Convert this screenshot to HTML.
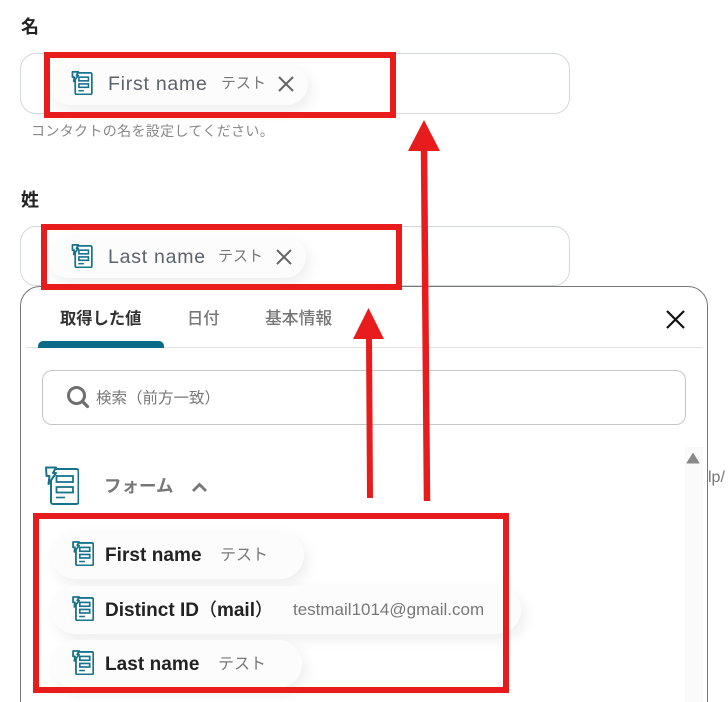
<!DOCTYPE html>
<html lang="ja">
<head>
<meta charset="utf-8">
<style>
html,body{margin:0;padding:0;background:#fff;}
#r{position:relative;width:728px;height:702px;overflow:hidden;background:#fff;font-family:"Liberation Sans","Noto Sans CJK JP",sans-serif;}
#r>*{position:absolute;}
.t{white-space:nowrap;line-height:1;}
.input{box-sizing:border-box;border:1px solid #d3d7de;border-radius:16px;background:#fff;}
.chip{border-radius:24px;background:#fcfcfc;box-shadow:4px 6px 14px rgba(0,0,0,.07);}
.red{box-sizing:border-box;border:6px solid #e81c1c;}
.name{color:#5c636c;font-size:19.5px;}
.jp{color:#777;font-size:15px;}
.b{color:#222;font-size:19px;font-weight:bold;}
.tab{font-size:16.3px;font-weight:500;color:#777;}
</style>
</head>
<body>
<div id="r">
<svg width="0" height="0" style="position:absolute"><defs>
<symbol id="ic" viewBox="0 0 34 39">
<rect x="6" y="3" width="27.5" height="35" rx="2" fill="#fff" stroke="#17738c" stroke-width="2"/>
<path d="M1 1.500H11L8 7H11L3.500 18L4.500 10H1.500Z" fill="#fff" stroke="#17738c" stroke-width="2" stroke-linejoin="round"/>
<rect x="11.500" y="10" width="16.500" height="6" fill="none" stroke="#17738c" stroke-width="1.800"/>
<rect x="11.500" y="21" width="16.500" height="5.500" fill="none" stroke="#17738c" stroke-width="1.800"/>
<path d="M11 31.500H20" stroke="#17738c" stroke-width="1.600"/>
</symbol>
<symbol id="is" viewBox="0 0 34 39">
<rect x="6" y="3" width="27" height="35" rx="2" fill="#fff" stroke="#17738c" stroke-width="2.800"/>
<path d="M1.500 1.500H11L8 7H11L3.500 17L4.500 10H1.500Z" fill="#fff" stroke="#17738c" stroke-width="2.800" stroke-linejoin="round"/>
<rect x="12" y="10" width="15.500" height="6" fill="none" stroke="#17738c" stroke-width="2.600"/>
<rect x="12" y="21" width="15.500" height="5.500" fill="none" stroke="#17738c" stroke-width="2.600"/>
<path d="M11 32H20" stroke="#17738c" stroke-width="2.400"/>
</symbol></defs></svg>

<div class="t" style="left:21px;top:18px;font-size:18px;font-weight:bold;color:#222;">名</div>
<div class="input" style="left:20px;top:53px;width:550px;height:61px;"></div>
<div class="chip" style="left:49px;top:63px;width:259px;height:42px;"></div>
<svg style="left:71px;top:71px" width="22" height="24"><use href="#is" width="22" height="24"/></svg>
<div class="t name" style="left:108px;top:75px;letter-spacing:.75px;">First name</div>
<div class="t jp" style="left:221px;top:76px;">テスト</div>
<svg style="left:277px;top:75px" width="18" height="18"><path d="M2 2L16 16M16 2L2 16" stroke="#666" stroke-width="2"/></svg>
<div class="t" style="left:31px;top:124px;font-size:14px;color:#888;letter-spacing:.35px;">コンタクトの名を設定してください。</div>

<div class="t" style="left:21px;top:191px;font-size:18px;font-weight:bold;color:#222;">姓</div>
<div class="input" style="left:20px;top:226px;width:550px;height:60px;"></div>
<div class="chip" style="left:47px;top:236px;width:259px;height:42px;"></div>
<svg style="left:71px;top:244px" width="22" height="24"><use href="#is" width="22" height="24"/></svg>
<div class="t name" style="left:108px;top:248px;letter-spacing:.75px;">Last name</div>
<div class="t jp" style="left:218px;top:249px;">テスト</div>
<svg style="left:275px;top:248px" width="18" height="18"><path d="M2 2L16 16M16 2L2 16" stroke="#666" stroke-width="2"/></svg>

<div style="box-sizing:border-box;left:20px;top:286px;width:688px;height:440px;border:1px solid #777;border-radius:20px;background:#fff;"></div>
<div class="t tab" style="left:60px;top:311px;color:#333;font-weight:bold;">取得した値</div>
<div class="t tab" style="left:187px;top:311px;">日付</div>
<div class="t tab" style="left:265px;top:311px;font-size:16.8px;">基本情報</div>
<div style="left:26px;top:347px;width:677px;height:1px;background:#e2e2e2;"></div>
<div style="left:38px;top:341px;width:126px;height:7px;background:#0b6a85;border-radius:5px 5px 0 0;"></div>
<svg style="left:664px;top:308px" width="23" height="23"><path d="M3 3L20 20M20 3L3 20" stroke="#111" stroke-width="2.200"/></svg>

<div style="box-sizing:border-box;left:42px;top:370px;width:644px;height:55px;border:1px solid #c6c6c6;border-radius:10px;"></div>
<svg style="left:65px;top:384px" width="26" height="26"><circle cx="11.500" cy="11.500" r="8" fill="none" stroke="#6f6f6f" stroke-width="3"/><path d="M17.500 17.500L22.500 22.500" stroke="#6f6f6f" stroke-width="3.200" stroke-linecap="round"/></svg>
<div class="t" style="left:96px;top:391px;font-size:15.5px;color:#777;">検索（前方一致）</div>

<svg style="left:45px;top:466px" width="34" height="39"><use href="#ic" width="34" height="39"/></svg>
<div class="t" style="left:104px;top:478px;font-size:17.5px;font-weight:bold;color:#777;">フォーム</div>
<svg style="left:190px;top:480px" width="19" height="14"><path d="M3 11L9.500 4.500L16 11" fill="none" stroke="#777" stroke-width="2.800"/></svg>

<div style="left:685px;top:447px;width:18px;height:255px;background:#fafafa;"></div>
<svg style="left:686px;top:452px" width="14" height="12"><path d="M7 1.500L13 11H1Z" fill="#888" stroke="#888" stroke-linejoin="round"/></svg>
<div class="t" style="left:708px;top:470px;font-size:16px;color:#777;">lp/</div>

<div class="chip" style="left:51px;top:531px;width:253px;height:48px;"></div>
<div class="chip" style="left:51px;top:586px;width:470px;height:48px;"></div>
<div class="chip" style="left:51px;top:640px;width:251px;height:48px;"></div>

<svg style="left:72px;top:541px" width="22" height="25"><use href="#is" width="22" height="25"/></svg>
<div class="t b" style="left:105px;top:546px;letter-spacing:.05px;">First name</div>
<div class="t jp" style="left:220px;top:548px;font-size:16px;">テスト</div>

<svg style="left:72px;top:596px" width="22" height="25"><use href="#is" width="22" height="25"/></svg>
<div class="t b" style="left:105px;top:600px;">Distinct ID<span style="font-family:'Noto Sans CJK JP',sans-serif;font-weight:500;font-size:18px;">（</span>mail<span style="font-family:'Noto Sans CJK JP',sans-serif;font-weight:500;font-size:18px;">）</span></div>
<div class="t" style="left:293px;top:601px;font-size:17px;color:#777;">testmail1014@gmail.com</div>

<svg style="left:72px;top:650px" width="22" height="25"><use href="#is" width="22" height="25"/></svg>
<div class="t b" style="left:105px;top:655px;letter-spacing:.05px;">Last name</div>
<div class="t jp" style="left:218px;top:657px;font-size:16px;">テスト</div>

<div class="red" style="left:44px;top:52px;width:352px;height:66px;"></div>
<div class="red" style="left:41px;top:224px;width:361px;height:66px;"></div>
<div class="red" style="left:33px;top:513px;width:476px;height:180px;"></div>

<svg style="left:0;top:0" width="728" height="702">
<path d="M427 501L424 148" stroke="#e81c1c" stroke-width="6.500" fill="none"/>
<path d="M424 120L440 151H408Z" fill="#e81c1c"/>
<path d="M370 498L369 336" stroke="#e81c1c" stroke-width="6" fill="none"/>
<path d="M368.500 308L384 339H353Z" fill="#e81c1c"/>
</svg>
</div>
</body>
</html>
